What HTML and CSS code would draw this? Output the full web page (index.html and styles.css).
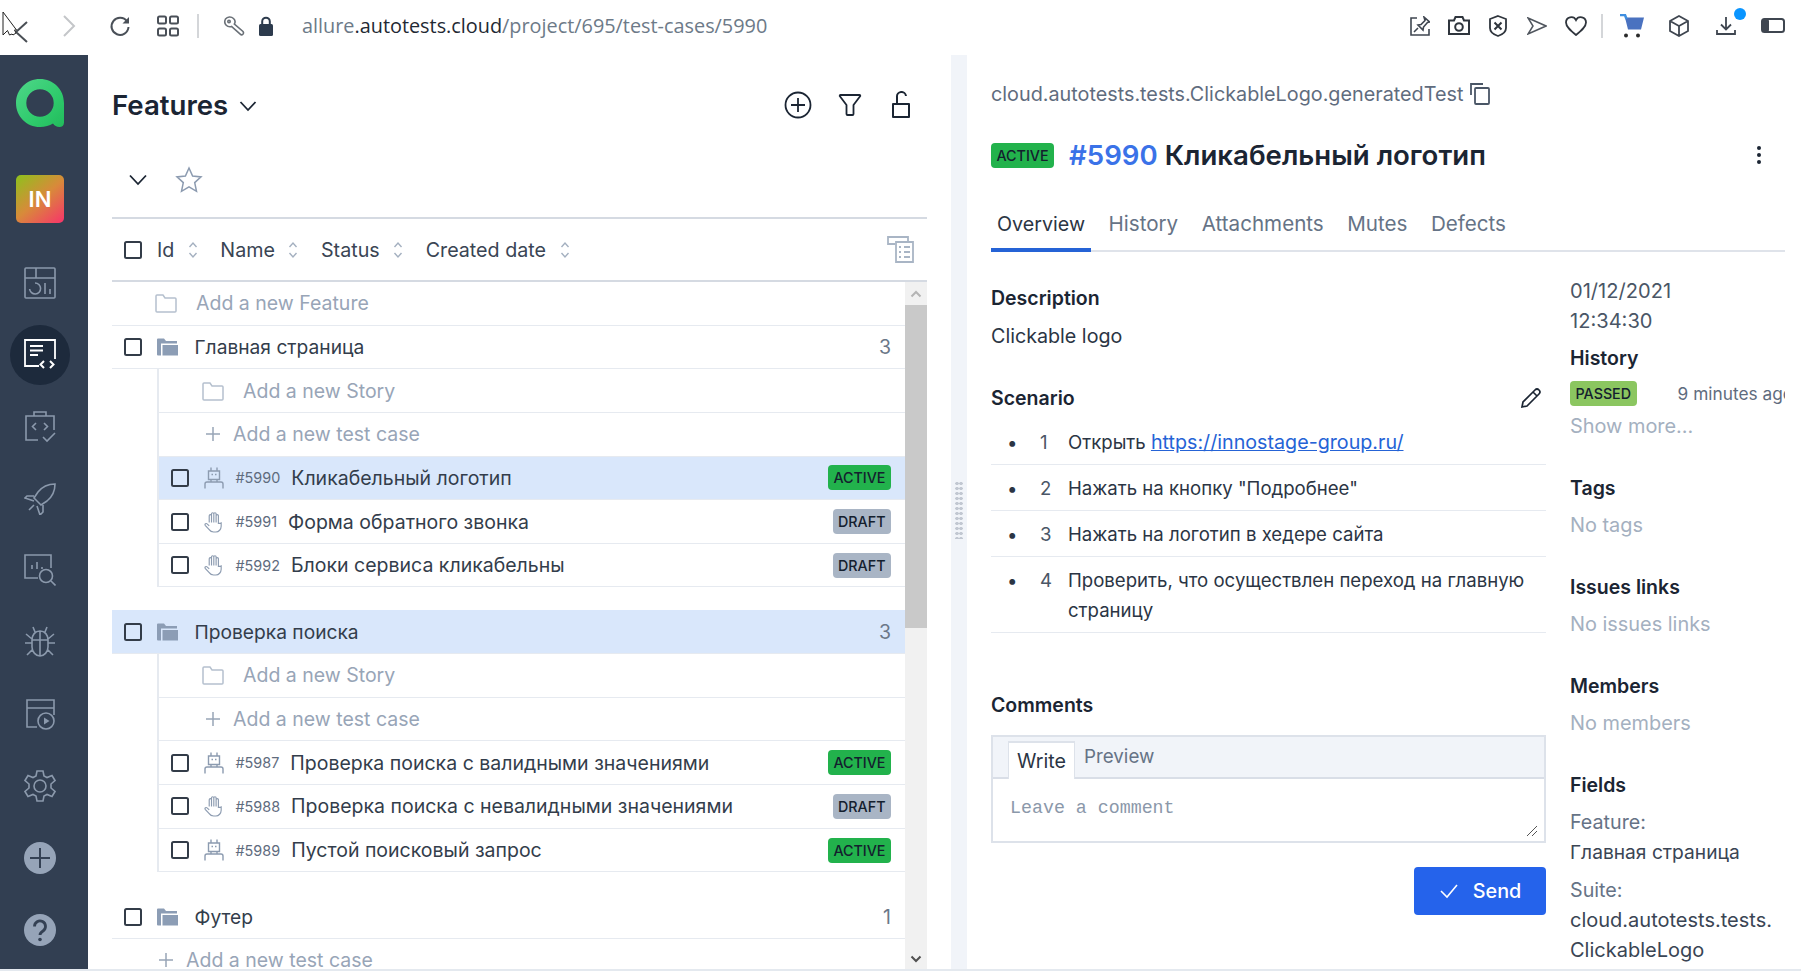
FILE: index.html
```html
<!DOCTYPE html>
<html lang="en">
<head>
<meta charset="utf-8">
<title>Allure TestOps</title>
<link rel="stylesheet" href="styles.css">
</head>
<body>
<svg class="defs" width="0" height="0">
  <defs>
    <symbol id="check" viewBox="0 0 18 18"><rect x="1" y="1" width="16" height="16" rx="1.5" fill="none" stroke="currentColor" stroke-width="2"/></symbol>
    <symbol id="sort" viewBox="0 0 12 20"><path d="M2.5 7 6 3l3.500 4M2.500 13 6 17l3.500-4" fill="none" stroke="currentColor" stroke-width="1.400"/></symbol>
    <symbol id="folder" viewBox="0 0 22 20"><path d="M1 3a1 1 0 0 1 1-1h6l2 3h10a1 1 0 0 1 1 1v12a1 1 0 0 1-1 1H2a1 1 0 0 1-1-1z" fill="none" stroke="currentColor" stroke-width="1.500"/></symbol>
    <symbol id="folderfill" viewBox="0 0 22 20"><path d="M1 2.500A1 1 0 0 1 2 1.500h6l2 2.500h11v2.500H5v12H2a1 1 0 0 1-1-1z" fill="currentColor"/><rect x="6.500" y="8" width="15.500" height="10.500" fill="currentColor"/></symbol>
    <symbol id="plus" viewBox="0 0 16 16"><path d="M8 1v14M1 8h14" stroke="currentColor" stroke-width="1.500"/></symbol>
    <symbol id="robot" viewBox="0 0 20 22"><path d="M7 .5v3.500M13 .5v3.500M4.500 4h11v8.500h-11zM7.500 7.500h1.500M11 7.500h1.500M7 12.500v2.500M13 12.500v2.500M1 21.500V17a2 2 0 0 1 2-2h14a2 2 0 0 1 2 2v4.500" fill="none" stroke="currentColor" stroke-width="1.400"/></symbol>
    <symbol id="hand" viewBox="0 0 20 23"><path d="M5 12V5a1.200 1.200 0 0 1 2.400 0V3a1.200 1.200 0 0 1 2.400 0v0a1.200 1.200 0 0 1 2.400 0v2a1.200 1.200 0 0 1 2.400 0v8c1 0 2 0 2.900-.5v3.500c0 3-2.500 6-5.500 6h-2.500c-2 0-3.500-1-4.500-2.500L.8 15c-.8-1.500 1-2.500 2-1.500L5 15.500M7.400 5v7M9.800 3v9M12.200 3v9" fill="none" stroke="currentColor" stroke-width="1.200"/></symbol>
  </defs>
</svg>

<header class="topbar">
  <div class="tb-left">
    <svg class="cursor" width="28" height="36" viewBox="0 0 28 36"><path d="M27 13 16 23l11 10" fill="none" stroke="#4a4f55" stroke-width="2"/><path d="M3 3v23l4.500-4.500 2 4.500 2.500-1 1 1 3-2-1.500-3h2z" fill="#fff" stroke="#222" stroke-width="1"/></svg>
    <svg class="fwd" width="14" height="24" viewBox="0 0 14 24"><path d="M2 2l10 10L2 22" fill="none" stroke="#c4c6c9" stroke-width="2"/></svg>
    <svg class="tb-ic reload" width="22" height="22" viewBox="0 0 22 22"><path d="M18 6.500A8.500 8.500 0 1 0 19.500 12" fill="none" stroke="#4a5058" stroke-width="2"/><path d="M20 2v6.500h-6.500z" fill="#4a5058"/></svg>
    <svg class="tb-ic apps" width="22" height="22" viewBox="0 0 22 22"><g fill="none" stroke="#4a5058" stroke-width="2"><rect x="1" y="1.500" width="8" height="7" rx="1.500"/><rect x="13" y="1.500" width="8" height="7" rx="1.500"/><rect x="1" y="13.500" width="8" height="7" rx="1.500"/><rect x="13" y="13.500" width="8" height="7" rx="1.500"/></g></svg>
    <span class="tb-div"></span>
    <svg class="tb-ic key" width="22" height="20" viewBox="0 0 22 20"><g fill="none" stroke="#6a7077" stroke-width="1.600"><path d="M2.500 3a5.500 5.500 0 0 1 8-.5c1.700 1.700 1.800 4 .9 5.500l8.600 7.500c.8 1 .5 2-.1 2.700-.8.800-1.900.7-2.700 0L8.500 10.500c-2 .5-4 0-5.300-1.300C1.500 7.500 1.500 5 2.500 3z"/><circle cx="6" cy="5.500" r="1.200"/></g></svg>
    <svg class="tb-ic lock" width="14" height="20" viewBox="0 0 14 20"><path d="M3.200 9V5.500a3.800 3.800 0 0 1 7.600 0V9" fill="none" stroke="#2d3b4d" stroke-width="2"/><rect x="0" y="8" width="14" height="12" rx="1.500" fill="#2d3b4d"/></svg>
    <div class="url">allure<span class="url-host">.autotests.cloud</span>/project/695/test-cases/5990</div>
  </div>
  <div class="tb-right">
    <span class="slot"><svg width="20" height="20" viewBox="0 0 20 20"><g fill="none" stroke="#3f4650" stroke-width="1.600"><path d="M7 2H1v17h18v-6"/><path d="M14 1l5.500 5-2 .5-4 4.500-.5 3-5-5 3-.5 4-4zM8 12l-4 4"/></g></svg></span>
    <span class="slot"><svg width="22" height="19" viewBox="0 0 22 19"><g fill="none" stroke="#2f353d" stroke-width="2"><path d="M1 4.500h5l1.500-3.500h7L16 4.500h5v13.500H1z"/><circle cx="11" cy="11" r="3.800"/></g></svg></span>
    <span class="slot"><svg width="18" height="22" viewBox="0 0 18 22"><g fill="none" stroke="#2f353d" stroke-width="1.800"><path d="M9 1l8 3v9c0 4-3.500 6.500-8 8-4.500-1.500-8-4-8-8V4z"/><path d="M5.500 7.500l7 7M12.500 7.500l-7 7" stroke-width="2"/></g></svg></span>
    <span class="slot"><svg width="20" height="18" viewBox="0 0 20 18"><path d="M1 1l18 8-18 8 5-8z" fill="none" stroke="#50565e" stroke-width="1.500"/></svg></span>
    <span class="slot"><svg width="22" height="20" viewBox="0 0 22 20"><path d="M11 19C6 15 1 11 1 6.500A5.300 5.300 0 0 1 11 4a5.300 5.300 0 0 1 10 2.500C21 11 16 15 11 19z" fill="none" stroke="#2f353d" stroke-width="1.800"/></svg></span>
    <span class="tb-div2"></span>
    <span class="slot wide"><svg width="24" height="24" viewBox="0 0 24 24"><path d="M5 3.500h19l-3 12H8z" fill="#4a72c0"/><path d="M0 1h5l1.500 4" fill="none" stroke="#3f8fe0" stroke-width="2.500"/><circle cx="6" cy="21.500" r="2" fill="#2b2b2b"/><circle cx="18" cy="21.500" r="2" fill="#2b2b2b"/></svg></span>
    <span class="slot wide"><svg width="20" height="22" viewBox="0 0 20 22"><g fill="none" stroke="#3f4650" stroke-width="1.800"><path d="M10 1l9 5v10l-9 5-9-5V6zM1 6l9 5 9-5M10 11v10"/></g></svg></span>
    <span class="slot wide dl"><svg width="20" height="18" viewBox="0 0 20 18"><g fill="none" stroke="#3f4650" stroke-width="1.800"><path d="M10 0v12M5 7.500l5 5 5-5M1 13v4h18v-4"/></g></svg><i class="dot"></i></span>
    <span class="slot wide"><svg width="24" height="15" viewBox="0 0 24 15"><rect x="1" y="1" width="22" height="13" rx="2.500" fill="none" stroke="#3f4650" stroke-width="2"/><rect x="1" y="1" width="7" height="13" rx="2" fill="#3f4650"/></svg></span>
  </div>
</header>

<div class="app">
  <nav class="sidebar">
    <svg class="logo" width="48" height="48" viewBox="0 0 48 48"><defs><linearGradient id="lg" x1="0" y1="0" x2="1" y2="1"><stop offset="0" stop-color="#4fd68a"/><stop offset=".6" stop-color="#2fcb6c"/><stop offset="1" stop-color="#22bb5c"/></linearGradient></defs><path d="M24 0c13 0 24 10 24 24v19.500c0 3-2 4.500-4.500 4.500-3 0-5-1.500-6.500-3.500C33.500 46.800 29 48 24 48 10.500 48 0 37.500 0 24S10.500 0 24 0zm0 10.300a13.700 13.700 0 1 0 0 27.400 13.700 13.700 0 0 0 0-27.400z" fill="url(#lg)"/></svg>
    <div class="tile">IN</div>
    <a class="nav"><svg width="32" height="32" viewBox="0 0 32 32"><g fill="none" stroke="#8b99ac" stroke-width="1.600"><rect x="1" y="1" width="30" height="30" rx="1"/><path d="M1 11h30M12 1v10M11 16a5.500 5.500 0 1 1-5.400 6M21 16v11M26 22v5"/></g></svg></a>
    <a class="nav on"><svg width="32" height="32" viewBox="0 0 32 32"><g fill="none" stroke="#fff" stroke-width="1.800"><path d="M15 27H1V1h30v19"/><path d="M6 7h13M6 11.500h13M6 16h8"/><path d="M20 22l-3.500 3.500L20 29M26 22l3.500 3.500L26 29" stroke-width="2"/></g></svg></a>
    <a class="nav"><svg width="32" height="32" viewBox="0 0 32 32"><g fill="none" stroke="#8b99ac" stroke-width="1.600"><path d="M14 29H2V5h28v14M10 5V1h12v4"/><path d="M12 12l-3.500 3.500L12 19M20 12l3.500 3.500L20 19M19 26l4 4 8-8"/></g></svg></a>
    <a class="nav"><svg width="32" height="32" viewBox="0 0 32 32"><g fill="none" stroke="#8b99ac" stroke-width="1.600"><path d="M31 1c-8 0-13 3-17 8l-4 6 7 7 6-4c5-4 8-9 8-17zM10 13H3l-2 2 9 3M19 22v7l-3 3-3-9M10 22l-5 5"/></g></svg></a>
    <a class="nav"><svg width="32" height="32" viewBox="0 0 32 32"><g fill="none" stroke="#8b99ac" stroke-width="1.600"><path d="M14 24H1V1h26v13"/><path d="M8 15v-4M13 15V8M18 15v-2"/><circle cx="22" cy="22" r="6.500"/><path d="M27 27l4.500 4.500"/></g></svg></a>
    <a class="nav"><svg width="32" height="32" viewBox="0 0 32 32"><g fill="none" stroke="#8b99ac" stroke-width="1.600"><path d="M8 14c0-5 3-9 8-9s8 4 8 9v7c0 5-4 9-8 9s-8-4-8-9zM16 5v25M8 14h16M11 6 9 1M21 6l2-5M1 17h7M24 17h7M2 8l6 5M30 8l-6 5M3 29l6-6M29 29l-6-6"/></g></svg></a>
    <a class="nav"><svg width="32" height="32" viewBox="0 0 32 32"><g fill="none" stroke="#8b99ac" stroke-width="1.600"><path d="M13 29H3V2h27v15M3 10h27"/><circle cx="22" cy="23" r="8"/></g><path d="M20 19.500v7l5.500-3.500z" fill="#8b99ac"/></svg></a>
    <a class="nav"><svg width="32" height="32" viewBox="0 0 32 32"><g fill="none" stroke="#8b99ac" stroke-width="1.600"><circle cx="16" cy="16" r="6"/><path d="M13 1h6l1 5 3 1.500 5-2 3 5-4 3.500v4l4 3.500-3 5-5-2-3 1.500-1 5h-6l-1-5L9 24.500l-5 2-3-5 4-3.500v-4L1 10.500l3-5 5 2L12 6z"/></g></svg></a>
    <a class="nav"><svg width="32" height="32" viewBox="0 0 32 32"><circle cx="16" cy="16" r="16" fill="#96a4b8"/><path d="M16 6v20M6 16h20" stroke="#344154" stroke-width="2"/></svg></a>
    <a class="nav"><svg width="32" height="32" viewBox="0 0 32 32"><circle cx="16" cy="16" r="16" fill="#96a4b8"/><path d="M10.500 12.500a5.500 5.500 0 1 1 8.500 4.500c-2 1.300-3 2-3 4" fill="none" stroke="#344154" stroke-width="2.800"/><circle cx="16" cy="25.500" r="1.800" fill="#344154"/></svg></a>
  </nav>

  <section class="tree">
    <div class="tree-head">
      <h1>Features</h1>
      <svg class="chev-title" width="18" height="12" viewBox="0 0 18 12"><path d="M1.500 2 9 10l7.500-8" fill="none" stroke="#1b2533" stroke-width="1.800"/></svg>
      <div class="tree-actions">
        <svg width="28" height="28" viewBox="0 0 28 28"><circle cx="14" cy="14" r="12.500" fill="none" stroke="#1b2533" stroke-width="1.800"/><path d="M14 7v14M7 14h14" stroke="#1b2533" stroke-width="1.800"/></svg>
        <svg width="24" height="24" viewBox="0 0 24 24"><path d="M2.500 2h19c.8 0 1 .8.600 1.300L15.500 12v9c0 .6-.4 1-1 1h-5c-.6 0-1-.4-1-1v-9L1.900 3.300C1.500 2.800 1.700 2 2.500 2z" fill="none" stroke="#1b2533" stroke-width="1.800" stroke-linejoin="round"/></svg>
        <svg class="unlock" width="20" height="28" viewBox="0 0 20 28"><path d="M2 13h16v13H2zM6 13V6a4.500 4.500 0 0 1 9-1" fill="none" stroke="#1b2533" stroke-width="2" stroke-linejoin="round"/></svg>
      </div>
    </div>
    <div class="filter">
      <svg width="18" height="12" viewBox="0 0 18 12"><path d="M1 1.500 9 10l8-8.500" fill="none" stroke="#1b2533" stroke-width="1.800"/></svg>
      <svg class="star" width="28" height="28" viewBox="0 0 28 28"><path d="M14 2l3.600 8 8.400.9-6.300 5.700 1.800 8.700-7.500-4.400-7.500 4.400 1.800-8.700L2 10.900l8.400-.9z" fill="none" stroke="#8c9bb0" stroke-width="1.500"/></svg>
    </div>
    <div class="thead">
      <svg class="cb"><use href="#check"/></svg>
      <span class="th th-id">Id</span><svg class="sort"><use href="#sort"/></svg>
      <span class="th">Name</span><svg class="sort"><use href="#sort"/></svg>
      <span class="th">Status</span><svg class="sort"><use href="#sort"/></svg>
      <span class="th">Created date</span><svg class="sort"><use href="#sort"/></svg>
      <svg class="columns" width="27" height="27" viewBox="0 0 27 27"><g fill="none" stroke="#a9b5c5" stroke-width="1.800"><path d="M8 8H1V1h20v5"/><path d="M9 6h17v20H9z"/><path d="M12 11h2M17 11h6M12 16h2M17 16h6M12 21h2M17 21h6"/></g></svg>
    </div>
    <div class="scroller">
      <div class="list">
        <div class="row add"><svg class="fold-o"><use href="#folder"/></svg><span class="add-f">Add a new Feature</span></div>

        <div class="row"><svg class="cb"><use href="#check"/></svg><svg class="fold"><use href="#folderfill"/></svg><span class="gname">Главная страница</span><span class="count">3</span></div>
        <div class="kids">
          <div class="row add"><svg class="fold-o"><use href="#folder"/></svg><span class="add-s">Add a new Story</span></div>
          <div class="row add"><svg class="plus"><use href="#plus"/></svg><span>Add a new test case</span></div>
          <div class="row sel"><svg class="cb"><use href="#check"/></svg><svg class="kind"><use href="#robot"/></svg><span class="id">#5990</span><span class="nm">Кликабельный логотип</span><span class="badge active">ACTIVE</span></div>
          <div class="row"><svg class="cb"><use href="#check"/></svg><svg class="kind"><use href="#hand"/></svg><span class="id">#5991</span><span class="nm">Форма обратного звонка</span><span class="badge draft">DRAFT</span></div>
          <div class="row"><svg class="cb"><use href="#check"/></svg><svg class="kind"><use href="#hand"/></svg><span class="id">#5992</span><span class="nm">Блоки сервиса кликабельны</span><span class="badge draft">DRAFT</span></div>
        </div>

        <div class="row sel group2"><svg class="cb"><use href="#check"/></svg><svg class="fold"><use href="#folderfill"/></svg><span class="gname">Проверка поиска</span><span class="count">3</span></div>
        <div class="kids">
          <div class="row add"><svg class="fold-o"><use href="#folder"/></svg><span class="add-s">Add a new Story</span></div>
          <div class="row add"><svg class="plus"><use href="#plus"/></svg><span>Add a new test case</span></div>
          <div class="row"><svg class="cb"><use href="#check"/></svg><svg class="kind"><use href="#robot"/></svg><span class="id">#5987</span><span class="nm">Проверка поиска с валидными значениями</span><span class="badge active">ACTIVE</span></div>
          <div class="row"><svg class="cb"><use href="#check"/></svg><svg class="kind"><use href="#hand"/></svg><span class="id">#5988</span><span class="nm">Проверка поиска с невалидными значениями</span><span class="badge draft">DRAFT</span></div>
          <div class="row"><svg class="cb"><use href="#check"/></svg><svg class="kind"><use href="#robot"/></svg><span class="id">#5989</span><span class="nm">Пустой поисковый запрос</span><span class="badge active">ACTIVE</span></div>
        </div>

        <div class="row group2"><svg class="cb"><use href="#check"/></svg><svg class="fold"><use href="#folderfill"/></svg><span class="gname">Футер</span><span class="count">1</span></div>
        <div class="row add add-last"><svg class="plus"><use href="#plus"/></svg><span>Add a new test case</span></div>
      </div>
      <div class="scrollbar">
        <div class="sb-btn"><svg width="12" height="8" viewBox="0 0 12 8"><path d="M1.500 6.500 6 2l4.500 4.500" fill="none" stroke="#b4b4b4" stroke-width="2"/></svg></div>
        <div class="sb-thumb"></div>
        <div class="sb-track"></div>
        <div class="sb-btn sb-end"><svg width="12" height="8" viewBox="0 0 12 8"><path d="M1.500 1.500 6 6l4.500-4.500" fill="none" stroke="#505050" stroke-width="2"/></svg></div>
      </div>
    </div>
  </section>

  <div class="splitter"><span class="grip"></span></div>

  <section class="detail">
    <div class="path"><span>cloud.autotests.tests.ClickableLogo.generatedTest</span>
      <svg width="22" height="22" viewBox="0 0 22 22"><g fill="none" stroke="#4a5666" stroke-width="1.800"><rect x="6" y="5" width="14" height="16" rx="1"/><path d="M2 12V1h12"/></g></svg>
    </div>
    <div class="title-row">
      <span class="badge active big">ACTIVE</span>
      <h2><span class="tnum">#5990</span> Кликабельный логотип</h2>
      <svg class="kebab" width="6" height="20" viewBox="0 0 6 20"><circle cx="3" cy="3" r="2" fill="#1b2533"/><circle cx="3" cy="10" r="2" fill="#1b2533"/><circle cx="3" cy="17" r="2" fill="#1b2533"/></svg>
    </div>
    <div class="tabs">
      <span class="tab cur">Overview</span><span class="tab">History</span><span class="tab">Attachments</span><span class="tab">Mutes</span><span class="tab">Defects</span>
    </div>
    <div class="columns2">
      <div class="col-main">
        <h3>Description</h3>
        <p class="desc">Clickable logo</p>
        <div class="scen-head"><h3>Scenario</h3>
          <svg width="22" height="22" viewBox="0 0 22 22"><path d="M2 20l1-5L15 3a2.500 2.500 0 0 1 4 4L7 19zM13 5l4 4" fill="none" stroke="#1b2533" stroke-width="1.700"/></svg>
        </div>
        <ol class="steps">
          <li class="step"><span class="bul">•</span><span class="num">1</span><span class="stxt">Открыть <a class="lnk">https://innostage-group.ru/</a></span></li>
          <li class="step"><span class="bul">•</span><span class="num">2</span><span class="stxt">Нажать на кнопку "Подробнее"</span></li>
          <li class="step"><span class="bul">•</span><span class="num">3</span><span class="stxt">Нажать на логотип в хедере сайта</span></li>
          <li class="step"><span class="bul">•</span><span class="num">4</span><span class="stxt">Проверить, что осуществлен переход на главную страницу</span></li>
        </ol>
        <h3 class="comments-h">Comments</h3>
        <div class="editor">
          <div class="ed-tabs"><span class="ed-tab on">Write</span><span class="ed-tab prev">Preview</span></div>
          <div class="ed-body"><span class="ph">Leave a comment</span>
            <svg class="resize" width="12" height="12" viewBox="0 0 12 12"><path d="M11 1 1 11M11 6l-5 5" stroke="#555" stroke-width="1"/></svg>
          </div>
        </div>
        <div class="send-row"><button class="send"><svg width="20" height="16" viewBox="0 0 20 16"><path d="M2 8l6 6L18 2" fill="none" stroke="#fff" stroke-width="1.600"/></svg>Send</button></div>
      </div>
      <aside class="col-side">
        <div class="date">01/12/2021<br>12:34:30</div>
        <h3 class="s-h hist">History</h3>
        <div class="hist-row"><span class="badge passed">PASSED</span><span class="ago">9 minutes ago</span></div>
        <div class="muted more">Show more...</div>
        <h3 class="s-h tags">Tags</h3>
        <div class="muted">No tags</div>
        <h3 class="s-h">Issues links</h3>
        <div class="muted">No issues links</div>
        <h3 class="s-h">Members</h3>
        <div class="muted">No members</div>
        <h3 class="s-h">Fields</h3>
        <div class="f-l">Feature:</div>
        <div class="f-v cyr">Главная страница</div>
        <div class="f-l f-gap">Suite:</div>
        <div class="f-v">cloud.autotests.tests.<br>ClickableLogo</div>
      </aside>
    </div>
  </section>
</div>
<div class="strip"></div>
</body>
</html>
```

FILE: styles.css
```css
* { box-sizing: border-box; }
html, body { margin: 0; height: 100%; }
body {
  width: 1801px;
  height: 971px;
  overflow: hidden;
  background: #fff;
  color: #2b3544;
  font-family: Inter, "Noto Sans", sans-serif;
  font-size: 19.7px;
  display: flex;
  flex-direction: column;
}
.defs { position: absolute; }
h1, h2, h3, p, ol { margin: 0; padding: 0; }
ol { list-style: none; }

/* browser chrome */
.topbar { height: 55px; flex: none; display: flex; justify-content: space-between; align-items: center; padding-bottom: 4px; }
.tb-left { display: flex; align-items: center; }
.cursor { align-self: flex-start; margin-top: 2px; }
.fwd { margin-left: 34px; }
.reload { margin-left: 33px; }
.apps { margin-left: 26px; }
.tb-div { width: 2px; height: 24px; background: #d4d6d9; margin-left: 18px; }
.key { margin-left: 24px; }
.lock { margin-left: 14px; }
.url { margin-left: 29px; font-family: "Open Sans", sans-serif; font-size: 19.85px; color: #6d7a88; }
.url-host { color: #1f2933; }
.tb-right { display: flex; align-items: center; padding-right: 4.500px; }
.slot { width: 39px; display: flex; justify-content: center; align-items: center; }
.slot.wide { width: 47px; }
.tb-div2 { width: 2px; height: 24px; background: #d4d6d9; margin: 0 6px 0 5px; }
.dl { position: relative; }
.dot { position: absolute; top: -9px; right: 4px; width: 12px; height: 12px; border-radius: 50%; background: #0a95ff; }

.app { flex: 1; display: flex; min-height: 0; }

/* sidebar */
.sidebar { width: 88px; flex: none; background: #323f52; display: flex; flex-direction: column; align-items: center; padding-top: 24px; padding-right: 8px; overflow: hidden; }
.logo { flex: none; }
.tile { width: 48px; height: 48px; flex: none; margin-top: 48px; margin-bottom: 30px; border-radius: 5px; background: linear-gradient(140deg, #8dc21c 0%, #d88a3a 50%, #f8336b 100%); color: #fff; font-size: 22px; font-weight: 600; display: flex; align-items: center; justify-content: center; }
.nav { width: 60px; height: 60px; margin-bottom: 11.850px; display: flex; align-items: center; justify-content: center; border-radius: 50%; flex: none; }
.nav.on { background: #1d2a3c; }

/* tree */
.tree { width: 863px; flex: none; padding-left: 24px; padding-right: 24px; display: flex; flex-direction: column; min-height: 0; }
.tree-head { height: 100px; flex: none; display: flex; align-items: center; }
.tree-head h1 { font-size: 27.600px; font-weight: 600; color: #1b2533; }
.chev-title { margin-left: 11px; margin-top: 2px; }
.tree-actions { margin-left: auto; display: flex; align-items: center; gap: 26px; padding-right: 16px; }
.unlock { margin-left: 3px; }
.filter { height: 64px; flex: none; border-bottom: 2px solid #d5dae2; display: flex; align-items: center; padding-left: 17px; padding-bottom: 12px; gap: 26px; }
.star { margin-left: 2px; }
.thead { height: 63px; flex: none; border-bottom: 2px solid #d5dae2; display: flex; align-items: center; padding-left: 12px; }
.cb { width: 18px; height: 18px; color: #333c48; flex: none; }
.th { color: #3a4554; }
.th-id { margin-left: 15px; }
.sort { width: 12px; height: 20px; color: #a4b0c0; margin: 0 21.500px 0 12.500px; flex: none; }
.columns { margin-left: auto; margin-right: 13px; }

.scroller { flex: 1; display: flex; min-height: 0; overflow: hidden; }
.list { flex: 1; min-width: 0; }
.row { height: 43.650px; display: flex; align-items: center; padding-left: 12px; padding-right: 14px; border-bottom: 1.500px solid #e6eaf0; white-space: nowrap; font-size: 19.500px; }
.row.add { color: #98a5b7; }
.row.sel { background: #d9e7fb; }
.fold-o { width: 22px; height: 20px; color: #b5c0ce; margin-left: 31px; flex: none; }
.add-f { margin-left: 19px; }
.add-s { margin-left: 19px; }
.plus { width: 16px; height: 16px; color: #98a5b7; margin-left: 34px; margin-right: 12px; flex: none; }
.fold { width: 22px; height: 20px; color: #8c9db5; margin-left: 14px; flex: none; }
.gname { margin-left: 16.500px; color: #333d4b; font-size: 19.200px; }
.count { margin-left: auto; color: #6b7788; }
.kids { margin-left: 45px; border-left: 2px solid #e6eaf0; }
.kind { width: 20px; height: 22px; color: #8c9bb0; margin-left: 15px; flex: none; }
.id { font-size: 14.400px; color: #5f6c7e; margin-left: 11.500px; flex: none; }
.nm { margin-left: 11px; color: #333d4b; }
.badge { margin-left: auto; font-size: 14.300px; font-weight: 500; line-height: 25px; height: 25px; padding: 0 5.500px; border-radius: 4px; color: #14202e; }
.active { background: #22b24c; }
.draft { background: #a9b5c5; }
.passed { background: #8bc660; margin-left: 0; }
.group2 { margin-top: 23px; }

.scrollbar { width: 22px; flex: none; display: flex; flex-direction: column; background: #f1f1f1; }
.sb-btn { height: 23px; flex: none; display: flex; align-items: center; justify-content: center; }
.sb-thumb { height: 323px; background: #c9c9c9; flex: none; }
.sb-track { flex: 1; }
.sb-end { height: 20px; }

.splitter { width: 16px; flex: none; background: #f1f4f9; display: flex; align-items: center; justify-content: center; padding-bottom: 4px; }
.grip { width: 8px; height: 58px; background-image: radial-gradient(circle, #c2c8d2 1.600px, transparent 1.900px); background-size: 4px 5px; }

/* detail */
.detail { flex: 1; min-width: 0; padding-left: 24px; overflow: hidden; }
.path { height: 26px; margin-top: 26px; display: flex; align-items: center; gap: 6px; font-size: 19.800px; color: #5f6c7e; }
.title-row { margin-top: 28px; height: 40px; display: flex; align-items: center; padding-right: 39px; }
.badge.big { margin-left: 0; }
.title-row h2 { font-size: 27.600px; font-weight: 600; color: #1b2533; margin-left: 15px; }
.tnum { color: #3a72e8; }
.kebab { margin-left: auto; }
.tabs { margin-top: 31px; margin-right: 16px; height: 46px; display: flex; border-bottom: 2px solid #dfe3ea; gap: 11.500px; }
.tab { color: #667386; padding: 0 6px; height: 46px; line-height: 36px; white-space: nowrap; font-size: 20.600px; }
.tab.cur { color: #2b3544; border-bottom: 4px solid #2563d6; font-size: 19.700px; }
.columns2 { display: flex; margin-top: 33px; }
.col-main { width: 555px; flex: none; }
h3 { font-size: 19.500px; font-weight: 600; color: #1b2533; line-height: 26px; }
.desc { margin-top: 12px; line-height: 26px; }
.scen-head { margin-top: 36px; display: flex; justify-content: space-between; align-items: center; padding-right: 4px; }
.steps { margin-top: 7.500px; font-size: 18.600px; }
.step { display: flex; border-bottom: 1.500px solid #e6eaf0; padding: 8px 0 7px; line-height: 30px; }
.bul { width: 49px; padding-left: 16px; flex: none; }
.num { width: 28px; flex: none; color: #4a5666; }
.stxt { flex: 1; padding-right: 14px; }
.lnk { color: #2563d6; text-decoration: underline; font-size: 19.700px; }
.comments-h { margin-top: 59px; }
.editor { margin-top: 17px; border: 2px solid #dde2ea; height: 108px; }
.ed-tabs { height: 42px; background: #f1f4f9; border-bottom: 2px solid #d9dee7; display: flex; align-items: flex-start; padding-left: 15px; }
.ed-tab { padding: 9px 9px 0; line-height: 22px; color: #667386; }
.ed-tab.prev { font-size: 18.800px; }
.ed-tab.on { background: #fff; color: #2b3544; border: 1px solid #dde2ea; border-top-width: 2px; border-bottom: 0; height: 38px; margin-top: 4px; padding: 7px 8px 0; }
.ed-body { position: relative; height: 62px; padding: 16px 17px; line-height: 22px; }
.ph { font-family: "Liberation Mono", monospace; font-size: 18.300px; color: #8b98aa; }
.resize { position: absolute; right: 6px; bottom: 4px; }
.send-row { display: flex; justify-content: flex-end; margin-top: 24px; }
.send { width: 132px; height: 48px; border: 0; border-radius: 4px; background: #2563eb; color: #fff; font-family: inherit; font-size: 19.800px; font-weight: 500; display: flex; align-items: center; justify-content: center; gap: 14px; }

.col-side { margin-left: 24px; margin-top: -9px; width: 215px; flex: none; white-space: nowrap; overflow: hidden; }
.date { line-height: 30px; color: #4a5666; font-size: 20.100px; }
.s-h { margin-top: 36px; }
.s-h.hist { margin-top: 9px; }
.s-h.tags { margin-top: 36px; }
.hist-row { display: flex; align-items: center; margin-top: 10px; height: 25px; }
.ago { margin-left: 41px; font-size: 17.300px; color: #5f6c7e; }
.muted { color: #a4b0c0; margin-top: 11px; line-height: 26px; font-size: 19.900px; }
.muted.more { margin-top: 7px; }
.f-l { margin-top: 9px; line-height: 30px; color: #667386; }
.f-v { line-height: 30px; color: #3a4554; font-size: 20px; }
.f-v.cyr { font-size: 19.200px; }
.f-gap { margin-top: 8px; }
.strip { height: 2px; flex: none; background: #e4e9ef; }
```
